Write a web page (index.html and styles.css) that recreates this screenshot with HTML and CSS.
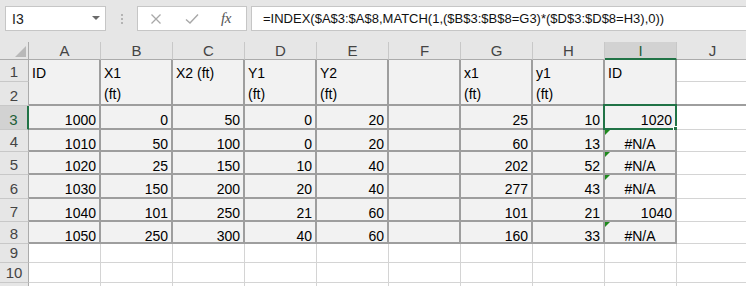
FILE: index.html
```html
<!DOCTYPE html>
<html>
<head>
<meta charset="utf-8">
<link rel="stylesheet" href="styles.css">
</head>
<body>
<div class="app">
  <div class="fbar">
    <div class="namebox">
      <span class="nb-text">I3</span>
      <span class="nb-arrow"></span>
    </div>
    <div class="grip"><i></i><i></i><i></i></div>
    <div class="btns">
      <svg class="ico" width="12" height="12" viewBox="0 0 12 12"><path d="M1.5 1.5 L10.5 10.5 M10.5 1.5 L1.5 10.5" stroke="#a8a8a8" stroke-width="1.3" fill="none"/></svg>
      <svg class="ico" width="14" height="12" viewBox="0 0 14 12"><path d="M1 6.5 L5 10 L13 1.5" stroke="#a8a8a8" stroke-width="1.4" fill="none"/></svg>
      <span class="fx">fx</span>
    </div>
    <div class="formula">=INDEX($A$3:$A$8,MATCH(1,($B$3:$B$8=G3)*($D$3:$D$8=H3),0))</div>
  </div>
  <div class="sheet">
    <div class="corner"><span class="tri"></span></div>
    <div class="ch">A</div><div class="ch">B</div><div class="ch">C</div><div class="ch">D</div><div class="ch">E</div>
    <div class="ch">F</div><div class="ch">G</div><div class="ch">H</div><div class="ch sel-h">I</div><div class="ch">J</div>

    <div class="rh">1</div>
    <div class="c t hd"><span>ID</span></div>
    <div class="c t hd"><span>X1<br>(ft)</span></div>
    <div class="c t hd"><span>X2 (ft)</span></div>
    <div class="c t hd"><span>Y1<br>(ft)</span></div>
    <div class="c t hd"><span>Y2<br>(ft)</span></div>
    <div class="c t hd"><span></span></div>
    <div class="c t hd"><span>x1<br>(ft)</span></div>
    <div class="c t hd"><span>y1<br>(ft)</span></div>
    <div class="c t hd"><span>ID</span></div>
    <div class="c"></div>
    <div class="rh">2</div>
    <div class="c thickb"></div>

    <div class="rh sel-r">3</div>
    <div class="c t">1000</div><div class="c t">0</div><div class="c t">50</div><div class="c t">0</div><div class="c t">20</div><div class="c t"></div><div class="c t">25</div><div class="c t">10</div>
    <div class="c t active">1020<span class="selbox"></span><span class="handle"></span></div><div class="c"></div>

    <div class="rh">4</div>
    <div class="c t">1010</div><div class="c t">50</div><div class="c t">100</div><div class="c t">0</div><div class="c t">20</div><div class="c t"></div><div class="c t">60</div><div class="c t">13</div>
    <div class="c t na err">#N/A</div><div class="c"></div>

    <div class="rh">5</div>
    <div class="c t">1020</div><div class="c t">25</div><div class="c t">150</div><div class="c t">10</div><div class="c t">40</div><div class="c t"></div><div class="c t">202</div><div class="c t">52</div>
    <div class="c t na err">#N/A</div><div class="c"></div>

    <div class="rh">6</div>
    <div class="c t">1030</div><div class="c t">150</div><div class="c t">200</div><div class="c t">20</div><div class="c t">40</div><div class="c t"></div><div class="c t">277</div><div class="c t">43</div>
    <div class="c t na err">#N/A</div><div class="c"></div>

    <div class="rh">7</div>
    <div class="c t">1040</div><div class="c t">101</div><div class="c t">250</div><div class="c t">21</div><div class="c t">60</div><div class="c t"></div><div class="c t">101</div><div class="c t">21</div>
    <div class="c t">1040</div><div class="c"></div>

    <div class="rh">8</div>
    <div class="c t">1050</div><div class="c t">250</div><div class="c t">300</div><div class="c t">40</div><div class="c t">60</div><div class="c t"></div><div class="c t">160</div><div class="c t">33</div>
    <div class="c t na err">#N/A</div><div class="c"></div>

    <div class="rh sm">9</div>
    <div class="c"></div><div class="c"></div><div class="c"></div><div class="c"></div><div class="c"></div><div class="c"></div><div class="c"></div><div class="c"></div><div class="c"></div><div class="c"></div>
    <div class="rh sm">10</div>
    <div class="c"></div><div class="c"></div><div class="c"></div><div class="c"></div><div class="c"></div><div class="c"></div><div class="c"></div><div class="c"></div><div class="c"></div><div class="c"></div>
    <div class="rh sm"></div>
    <div class="c"></div><div class="c"></div><div class="c"></div><div class="c"></div><div class="c"></div><div class="c"></div><div class="c"></div><div class="c"></div><div class="c"></div><div class="c"></div>
  </div>
</div>
</body>
</html>
```

FILE: styles.css
```css
html, body {
  margin: 0;
  padding: 0;
  background: #e6e6e6;
  overflow: hidden;
}
.app {
  width: 746px;
  height: 286px;
  overflow: hidden;
  font-family: "Liberation Sans", Arial, sans-serif;
}
.fbar {
  height: 42px;
  box-sizing: border-box;
  padding-top: 6px;
  display: flex;
  align-items: flex-start;
}
.namebox {
  margin-left: 5px;
  width: 101px;
  height: 25px;
  box-sizing: border-box;
  background: #fff;
  border: 1px solid #c6c6c6;
  display: flex;
  align-items: center;
  justify-content: space-between;
  padding: 0 5px 0 6px;
  font-size: 14px;
  color: #222;
}
.nb-arrow {
  width: 0;
  height: 0;
  border-left: 4px solid transparent;
  border-right: 4px solid transparent;
  border-top: 4px solid #6a6a6a;
  margin-bottom: 2px;
}
.grip {
  width: 31px;
  height: 25px;
  display: flex;
  flex-direction: column;
  align-items: center;
  justify-content: center;
  gap: 2px;
}
.grip i {
  display: block;
  width: 2px;
  height: 2px;
  background: #b4b4b4;
}
.btns {
  width: 110px;
  height: 25px;
  box-sizing: border-box;
  background: #fff;
  border: 1px solid #c6c6c6;
  display: flex;
  align-items: center;
  padding-left: 12px;
}
.btns .ico:nth-child(1) { margin-top: 1px; }
.btns .ico:nth-child(2) { margin-left: 23px; margin-top: 1px; }
.fx {
  margin-left: 22px;
  font-family: "Liberation Serif", serif;
  font-style: italic;
  font-size: 15px;
  color: #555;
  letter-spacing: -0.5px;
}
.formula {
  margin-left: 4px;
  flex: 1;
  height: 25px;
  box-sizing: border-box;
  background: #fff;
  border: 1px solid #c6c6c6;
  border-right: 0;
  padding-left: 11px;
  font-size: 13px;
  line-height: 23px;
  color: #111;
  white-space: nowrap;
}
.sheet {
  display: grid;
  grid-template-columns: 29px repeat(10, 72px);
  grid-template-rows: 18px 22px 24px 24px 22px 23px 24px 23px 22px 19px 20px 20px;
  background: #fff;
  font-size: 14px;
  color: #000;
}
.corner {
  background: #e6e6e6;
  border-right: 1px solid #ababab;
  border-bottom: 1px solid #ababab;
  position: relative;
}
.tri {
  position: absolute;
  right: 2px;
  bottom: 2px;
  width: 0;
  height: 0;
  border-left: 11px solid transparent;
  border-bottom: 11px solid #b9b9b9;
}
.ch {
  background: #e6e6e6;
  border-right: 1px solid #c8c8c8;
  border-bottom: 1px solid #ababab;
  text-align: center;
  font-size: 15px;
  line-height: 18px;
  color: #444;
}
.ch.sel-h {
  background: #d2d2d2;
  border-bottom: 2px solid #217346;
  color: #1e5e38;
}
.rh {
  grid-column: 1;
  background: #e6e6e6;
  border-right: 1px solid #ababab;
  border-bottom: 1px solid #c8c8c8;
  text-align: center;
  font-size: 15px;
  color: #444;
  display: flex;
  align-items: flex-end;
  justify-content: center;
  padding-bottom: 1px;
  box-sizing: border-box;
  line-height: 17px;
}
.rh.sel-r {
  background: #d2d2d2;
  border-right: 2px solid #217346;
  color: #1e5e38;
}
.c {
  box-sizing: border-box;
  border-right: 1px solid #d4d4d4;
  border-bottom: 1px solid #d4d4d4;
  background: #fff;
  text-align: right;
  padding: 5px 3px 0 3px;
  line-height: 18px;
  white-space: nowrap;
  position: relative;
}
.c.t {
  background: #f2f2f2;
  border-right: 2px solid #9e9e9e;
  border-bottom: 2px solid #9e9e9e;
}
.c.thickb {
  border-bottom: 2px solid #9e9e9e;
}
.c.hd {
  grid-row: span 2;
  text-align: left;
  padding: 3px 3px 0 3px;
  line-height: 21px;
}
.c.na {
  text-align: center;
}
.err::before {
  content: "";
  position: absolute;
  left: 0;
  top: 0;
  width: 0;
  height: 0;
  border-top: 5px solid #1e8a1e;
  border-right: 5px solid transparent;
}
.selbox {
  position: absolute;
  left: -2px;
  top: -2px;
  right: -2px;
  bottom: -2px;
  border: 2px solid #217346;
}
.handle {
  position: absolute;
  right: -5px;
  bottom: -5px;
  width: 5px;
  height: 5px;
  background: #217346;
  border: 1px solid #fff;
}
```
